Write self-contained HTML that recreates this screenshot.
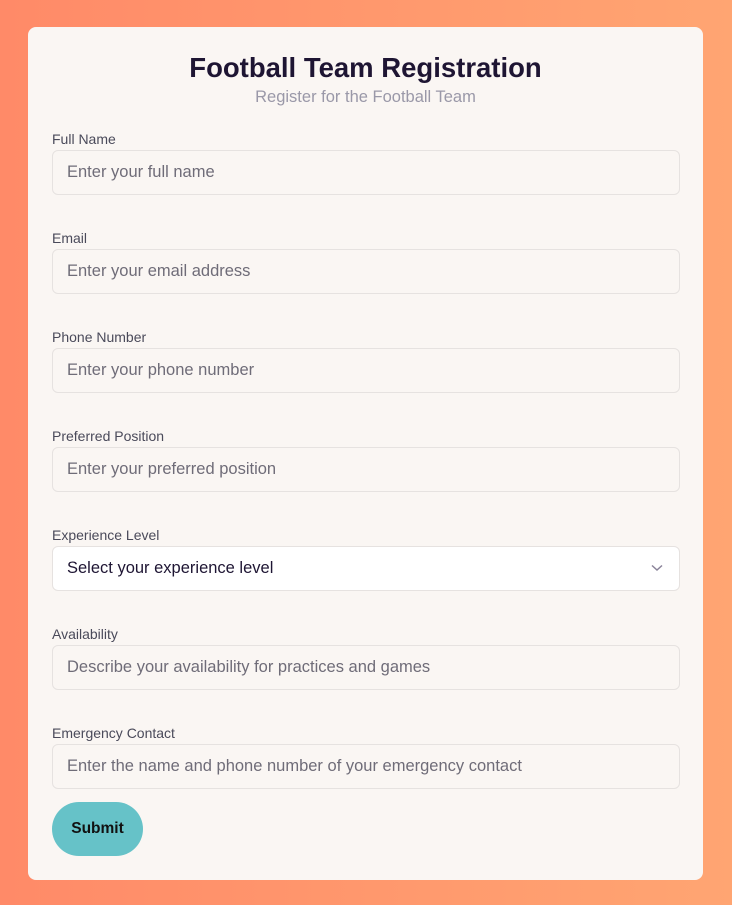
<!DOCTYPE html>
<html><head><meta charset="utf-8"><style>
*{box-sizing:border-box;margin:0;padding:0}
body{width:732px;height:905px;background:linear-gradient(90deg,#ff8a68,#ffa572);font-family:"Liberation Sans",sans-serif;position:relative;overflow:hidden}
.card{position:absolute;left:28px;top:27px;width:675px;height:853px;background:#faf6f3;border-radius:8px}
h1{position:absolute;left:0;right:0;top:25px;text-align:center;font-size:27.5px;font-weight:700;color:#1e1533}
.sub{position:absolute;left:0;right:0;top:61px;text-align:center;font-size:16.5px;color:#9a98a8}
.f{position:absolute;left:24px;width:628px}
.f label{display:block;font-size:14px;color:#4a4a5a;height:16px;line-height:16px}
.in{margin-top:3px;height:45px;border:1px solid #e6e2e0;border-radius:6px;padding:0 14px;line-height:43px;font-size:16.5px;color:#6f6c78;position:relative}
.sel{background:#fff;color:#1e1533}
.sel svg{position:absolute;right:16px;top:17px}
.btn{position:absolute;left:24px;top:775px;width:91px;height:54px;border-radius:27px;background:#66c2c8;font-size:15.5px;font-weight:700;color:#111;text-align:center;line-height:54px}
</style></head><body>
<div class="card">
<h1>Football Team Registration</h1>
<div class="sub">Register for the Football Team</div>
<div class="f" style="top:104px"><label>Full Name</label><div class="in">Enter your full name</div></div>
<div class="f" style="top:203px"><label>Email</label><div class="in">Enter your email address</div></div>
<div class="f" style="top:302px"><label>Phone Number</label><div class="in">Enter your phone number</div></div>
<div class="f" style="top:401px"><label>Preferred Position</label><div class="in">Enter your preferred position</div></div>
<div class="f" style="top:500px"><label>Experience Level</label><div class="in sel">Select your experience level<svg width="12" height="8" viewBox="0 0 12 8"><path d="M1 1.5L6 6L11 1.5" fill="none" stroke="#8a8399" stroke-width="1.5"/></svg></div></div>
<div class="f" style="top:599px"><label>Availability</label><div class="in">Describe your availability for practices and games</div></div>
<div class="f" style="top:698px"><label>Emergency Contact</label><div class="in">Enter the name and phone number of your emergency contact</div></div>
<div class="btn">Submit</div>
</div>
</body></html>
